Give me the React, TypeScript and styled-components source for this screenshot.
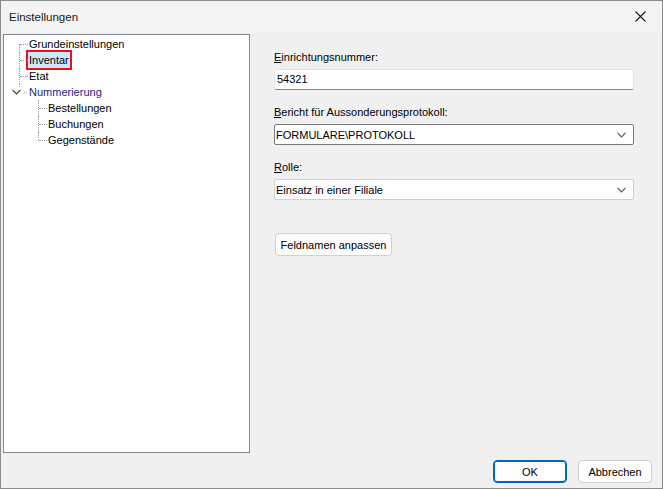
import React, {FC} from 'react';
import styled, {createGlobalStyle, css} from 'styled-components';

type TreeItem = {
    id: string
    label: string
    level: number
    first?: boolean
    last?: boolean
    expanded?: boolean
    selected?: boolean
    hot?: boolean
}

const tree: TreeItem[] = [
    {id: 'grund', label: 'Grundeinstellungen', level: 0, first: true},
    {id: 'inv', label: 'Inventar', level: 0, selected: true},
    {id: 'etat', label: 'Etat', level: 0},
    {id: 'num', label: 'Nummerierung', level: 0, last: true, expanded: true, hot: true},
    {id: 'best', label: 'Bestellungen', level: 1},
    {id: 'buch', label: 'Buchungen', level: 1},
    {id: 'geg', label: 'Gegenstände', level: 1, last: true},
]

const Chevron: FC<{ color?: string }> = ({color = '#5c5c5c'}) => (
    <svg width="9" height="6" viewBox="0 0 9 6">
        <path d="M0.5 0.8 L4.5 4.8 L8.5 0.8" fill="none" stroke={color} strokeWidth="1.2"/>
    </svg>
)

const App: FC = () => {
    return (
        <>
            <GlobalStyle/>
            <Window>
                <TitleBar>
                    <Title>Einstellungen</Title>
                    <CloseButton>
                        <svg width="11" height="11" viewBox="0 0 11 11">
                            <path d="M0.5 0.5 L10.5 10.5 M10.5 0.5 L0.5 10.5" stroke="#1a1a1a" strokeWidth="1.1"/>
                        </svg>
                    </CloseButton>
                </TitleBar>
                <Body>
                    <TreeBox>
                        {tree.map(item => (
                            <TreeRow key={item.id} $level={item.level}>
                                <Gutter $first={item.first} $last={item.last} $expanded={item.expanded}>
                                    {item.expanded && (
                                        <Expander>
                                            <Chevron color="#3c3c3c"/>
                                        </Expander>
                                    )}
                                </Gutter>
                                <TreeLabel $selected={item.selected} $hot={item.hot}>{item.label}</TreeLabel>
                            </TreeRow>
                        ))}
                    </TreeBox>
                    <FormPanel>
                        <FieldGroup>
                            <FieldLabel><u>E</u>inrichtungsnummer:</FieldLabel>
                            <TextBox>54321</TextBox>
                        </FieldGroup>
                        <FieldGroup>
                            <FieldLabel><u>B</u>ericht für Aussonderungsprotokoll:</FieldLabel>
                            <ComboBox $focused>
                                <span>FORMULARE\PROTOKOLL</span>
                                <Chevron/>
                            </ComboBox>
                        </FieldGroup>
                        <FieldGroup>
                            <FieldLabel><u>R</u>olle:</FieldLabel>
                            <ComboBox>
                                <span>Einsatz in einer Filiale</span>
                                <Chevron/>
                            </ComboBox>
                        </FieldGroup>
                        <PushButton $width={117} $indent>Feldnamen anpassen</PushButton>
                    </FormPanel>
                </Body>
                <Footer>
                    <PushButton $width={74} $default>OK</PushButton>
                    <PushButton $width={74}>Abbrechen</PushButton>
                </Footer>
            </Window>
        </>
    );
};

export default App;


const GlobalStyle = createGlobalStyle`
  html, body {
    margin: 0;
    padding: 0;
    background: #f0f0f0;
  }
  body {
    font-family: "Liberation Sans", Arial, sans-serif;
    font-size: 11px;
    color: #000;
  }
  * {
    box-sizing: border-box;
  }
`
const Window = styled.div`
  width: 663px;
  height: 489px;
  border: 1px solid #8c8c8c;
  background: #f0f0f0;
  display: flex;
  flex-direction: column;
`
const TitleBar = styled.div`
  height: 32px;
  flex-shrink: 0;
  display: flex;
  align-items: center;
  justify-content: space-between;
  padding: 0 0 1px 8px;
  background: #f3f3f3;
`
const Title = styled.div`
  font-size: 11.5px;
  color: #1a1a1a;
`
const CloseButton = styled.div`
  width: 46px;
  height: 31px;
  display: flex;
  align-items: center;
  justify-content: center;
  margin-right: -1px;
`
const Body = styled.div`
  flex: 1;
  display: flex;
  padding: 1px 0 0 2px;
  min-height: 0;
`
const TreeBox = styled.div`
  width: 247px;
  height: 419px;
  flex-shrink: 0;
  background: #fff;
  border: 1px solid #828790;
  padding-top: 1px;
`
const TreeRow = styled.div<{ $level: number }>`
  display: flex;
  align-items: center;
  height: 16px;
  padding-left: ${p => p.$level * 19}px;
`
const dotted = '#a0a0a0'
const Gutter = styled.div<{ $first?: boolean, $last?: boolean, $expanded?: boolean }>`
  position: relative;
  width: 24px;
  height: 16px;
  flex-shrink: 0;

  &::before {
    content: '';
    position: absolute;
    left: 15px;
    top: ${p => p.$first ? 8 : 0}px;
    height: ${p => p.$first ? 8 : p.$last ? (p.$expanded ? 3 : 8) : 16}px;
    border-left: 1px dotted ${dotted};
  }

  &::after {
    content: '';
    position: absolute;
    top: 8px;
    left: ${p => p.$expanded ? 20 : 16}px;
    width: ${p => p.$expanded ? 3 : 8}px;
    border-top: 1px dotted ${dotted};
  }
`
const Expander = styled.div`
  position: absolute;
  left: 8px;
  top: 5px;
  width: 9px;
  height: 6px;
  display: flex;
`
const TreeLabel = styled.span<{ $selected?: boolean, $hot?: boolean }>`
  height: 16px;
  line-height: 16px;
  padding: 0 1px;
  white-space: nowrap;
  color: ${p => p.$hot ? '#1c1c8c' : '#000'};
  ${p => p.$selected && css`
    background: #cce8ff;
    outline: 2px solid #e8101a;
  `}
`
const FormPanel = styled.div`
  flex: 1;
  display: flex;
  flex-direction: column;
  align-items: flex-start;
  gap: 14px;
  padding: 15px 28px 0 24px;
`
const FieldGroup = styled.div`
  width: 100%;
  display: flex;
  flex-direction: column;
  gap: 4px;
`
const FieldLabel = styled.div`
  line-height: 16px;
  height: 16px;
  white-space: nowrap;
`
const TextBox = styled.div`
  height: 21px;
  background: #fff;
  border: 1px solid #e5e5e5;
  border-bottom-color: #868686;
  border-radius: 2px;
  padding: 0 2px;
  line-height: 19px;
`
const ComboBox = styled.div<{ $focused?: boolean }>`
  height: 21px;
  display: flex;
  align-items: center;
  justify-content: space-between;
  padding: 0 7px 0 1px;
  background: ${p => p.$focused ? '#fff' : '#fdfdfd'};
  border: 1px solid ${p => p.$focused ? '#7a7a7a' : '#d0d0d0'};
  border-radius: 2px;
  white-space: nowrap;
`
const PushButton = styled.div<{ $width: number, $default?: boolean, $indent?: boolean }>`
  width: ${p => p.$width}px;
  height: 23px;
  display: flex;
  align-items: center;
  justify-content: center;
  background: #fdfdfd;
  border: 1px solid ${p => p.$default ? '#0067c0' : '#d0d0d0'};
  border-radius: 4px;
  white-space: nowrap;
  ${p => p.$default && css`
    box-shadow: inset 0 0 0 1px #0067c0;
  `}
  ${p => p.$indent && css`
    margin: 19px 0 0 1px;
  `}
`
const Footer = styled.div`
  height: 35px;
  flex-shrink: 0;
  display: flex;
  justify-content: flex-end;
  gap: 11px;
  padding: 7px 10px 5px 0;
`
